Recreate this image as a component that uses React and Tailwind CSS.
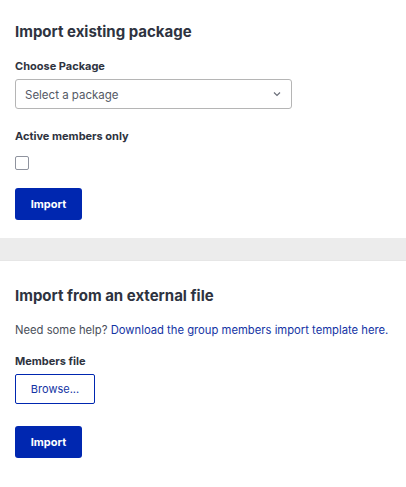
import React from "react";

export default function App() {
  return (
    <div className="w-[406px] min-h-[487px] bg-white text-[#2e3340]" style={{ fontFamily: "Inter, 'Liberation Sans', sans-serif" }}>
      <section className="px-[15px] pt-[22px] pb-[18px]">
        <h2 className="text-[15px] leading-[20px] font-bold text-[#2e3340]">Import existing package</h2>
        <label className="block mt-[16px] text-[11px] leading-[16px] font-bold text-[#2e3340]">Choose Package</label>
        <div className="mt-[5px] w-[277px] h-[30px] border border-[#b5b5b5] rounded-[3px] flex items-center justify-between pl-[9px] pr-[10px]">
          <span className="text-[11.5px] leading-[16px] pt-[1px] text-[#555a66]">Select a package</span>
          <svg width="8" height="6" viewBox="0 0 8 6" fill="none">
            <path d="M1 1.5L4 4.5L7 1.5" stroke="#6b6f7a" strokeWidth="1.2" />
          </svg>
        </div>
        <label className="block mt-[19px] text-[11px] leading-[16px] font-bold text-[#2e3340]">Active members only</label>
        <div className="mt-[12px] w-[14px] h-[14px] border border-[#8f939e] rounded-[2px] bg-white" />
        <button className="block mt-[18px] w-[67px] h-[32px] bg-[#0027b0] rounded-[3px] text-white text-[11px] font-bold">Import</button>
      </section>
      <div className="h-[23px] bg-[#ececec] border-b border-[#e6e6e6]" />
      <section className="px-[15px] pt-[25px] pb-[30px]">
        <h2 className="text-[15px] leading-[20px] font-bold text-[#2e3340]">Import from an external file</h2>
        <p className="mt-[16px] text-[11.25px] leading-[16px] whitespace-nowrap text-[#4a4f5a]">
          Need some help? <a className="text-[#1434a4]">Download the group members import template here.</a>
        </p>
        <label className="block mt-[15px] text-[11px] leading-[16px] font-bold text-[#2e3340]">Members file</label>
        <button className="block mt-[5px] w-[80px] h-[30px] border border-[#0027b0] rounded-[2px] text-[11px] text-[#1434a4] bg-white">Browse...</button>
        <button className="block mt-[22px] w-[67px] h-[32px] bg-[#0027b0] rounded-[3px] text-white text-[11px] font-bold">Import</button>
      </section>
    </div>
  );
}
